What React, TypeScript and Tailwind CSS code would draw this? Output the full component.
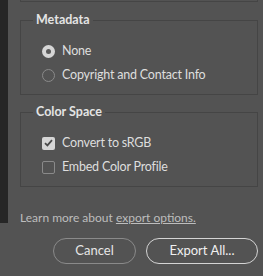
import React from "react";

const font = { fontFamily: 'Lato, "Open Sans", sans-serif' };

function Radio({ checked, label }: { checked?: boolean; label: string }) {
  return (
    <label className="flex h-6 items-center gap-[7px]">
      {checked ? (
        <span className="flex h-[13px] w-[13px] items-center justify-center rounded-full bg-[#d6d6d6]">
          <span className="h-[5px] w-[5px] rounded-full bg-[#5a5a5a]" />
        </span>
      ) : (
        <span className="h-[13px] w-[13px] rounded-full border border-[#8a8a8a]" />
      )}
      <span className="text-[12.5px] tracking-[-0.2px] text-[#dedede]">{label}</span>
    </label>
  );
}

function Check({ checked, label }: { checked?: boolean; label: string }) {
  return (
    <label className="flex h-6 items-center gap-[7px]">
      {checked ? (
        <span className="flex h-[13px] w-[13px] items-center justify-center rounded-[2px] bg-[#d6d6d6]">
          <svg width="9" height="8" viewBox="0 0 9 8">
            <path d="M1 4.2 L3.4 6.4 L8 1.2" fill="none" stroke="#4a4a4a" strokeWidth="1.8" />
          </svg>
        </span>
      ) : (
        <span className="h-[13px] w-[13px] rounded-[2px] border border-[#8a8a8a]" />
      )}
      <span className="text-[12.5px] tracking-[-0.2px] text-[#dedede]">{label}</span>
    </label>
  );
}

function Group({ title, children }: { title: string; children: React.ReactNode }) {
  return (
    <fieldset className="border border-[#454545] pt-[10px] pb-[7px]">
      <legend className="ml-3 px-[3px] text-[12.5px] font-bold leading-[18px] text-[#e4e4e4]">
        {title}
      </legend>
      <div className="pl-[21px]">{children}</div>
    </fieldset>
  );
}

export default function App() {
  return (
    <div className="flex h-[276px] w-[263px] bg-[#535353]" style={font}>
      <div className="h-[223px] w-2 shrink-0 bg-[#262626]" />
      <div className="flex flex-1 flex-col pl-3 pr-[5px]">
        <div className="h-[2px] border-x border-b border-[#454545]" />

        <div className="mt-[9px]">
          <Group title="Metadata">
            <Radio checked label="None" />
            <Radio label="Copyright and Contact Info" />
          </Group>
        </div>

        <div className="mt-[8px]">
          <Group title="Color Space">
            <Check checked label="Convert to sRGB" />
            <Check label="Embed Color Profile" />
          </Group>
        </div>

        <p className="mt-[23px] text-[12px] leading-4 text-[#bdbdbd]">
          Learn more about <span className="underline">export options.</span>
        </p>

        <div className="mt-[12px] flex justify-end gap-[10px]">
          <button className="h-[26px] w-[83px] rounded-full border border-[#8a8a8a] text-[13px] text-[#e6e6e6]">
            Cancel
          </button>
          <button className="h-[26px] w-[112px] rounded-full border border-[#d4d4d4] text-[13px] text-[#f0f0f0]">
            Export All...
          </button>
        </div>
      </div>
    </div>
  );
}
